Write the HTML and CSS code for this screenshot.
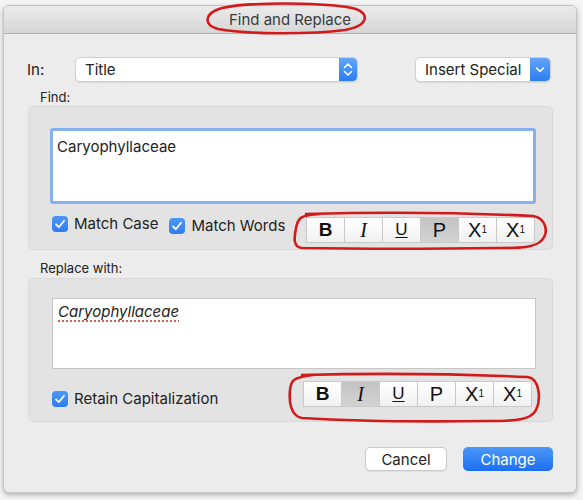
FILE: index.html
```html
<!DOCTYPE html>
<html>
<head>
<meta charset="utf-8">
<link rel="stylesheet" href="styles.css">
</head>
<body>
<div class="window">
  <div class="titlebar">Find and Replace</div>
  <div class="content">
    <div class="top-row">
      <span class="in-label">In:</span>
      <div class="popup popup-title">
        <span class="popup-text">Title</span>
        <span class="stepper">
          <svg width="18" height="23" viewBox="0 0 18 23"><path d="M5.5 9.5 L9 6 L12.5 9.5" fill="none" stroke="#fff" stroke-width="1.6" stroke-linecap="round" stroke-linejoin="round"/><path d="M5.5 13.5 L9 17 L12.5 13.5" fill="none" stroke="#fff" stroke-width="1.6" stroke-linecap="round" stroke-linejoin="round"/></svg>
        </span>
      </div>
      <div class="popup popup-special">
        <span class="popup-text">Insert Special</span>
        <span class="stepper">
          <svg width="20" height="23" viewBox="0 0 20 23"><path d="M6.5 10 L10 13.5 L13.5 10" fill="none" stroke="#fff" stroke-width="1.6" stroke-linecap="round" stroke-linejoin="round"/></svg>
        </span>
      </div>
    </div>

    <div class="section-label find-label">Find:</div>
    <div class="group find-group">
      <div class="field field-focus">Caryophyllaceae</div>
      <div class="option-row find-row">
        <label class="check"><span class="box"><svg width="16" height="16" viewBox="0 0 16 16"><path d="M4 8.3 L6.8 11.2 L12 4.8" fill="none" stroke="#fff" stroke-width="1.8" stroke-linecap="round" stroke-linejoin="round"/></svg></span>Match Case</label>
        <label class="check check-words"><span class="box"><svg width="16" height="16" viewBox="0 0 16 16"><path d="M4 8.3 L6.8 11.2 L12 4.8" fill="none" stroke="#fff" stroke-width="1.8" stroke-linecap="round" stroke-linejoin="round"/></svg></span>Match Words</label>
        <div class="fmt fmt-find">
          <span class="fb fb-b">B</span><span class="fb fb-i">I</span><span class="fb fb-u">U</span><span class="fb fb-p on">P</span><span class="fb fb-x">X<sup>1</sup></span><span class="fb fb-x">X<sub>1</sub></span>
        </div>
      </div>
    </div>

    <div class="section-label replace-label">Replace with:</div>
    <div class="group replace-group">
      <div class="field field-plain"><span class="misspelt">Caryophyllaceae</span></div>
      <div class="option-row replace-row">
        <label class="check check-retain"><span class="box"><svg width="16" height="16" viewBox="0 0 16 16"><path d="M4 8.3 L6.8 11.2 L12 4.8" fill="none" stroke="#fff" stroke-width="1.8" stroke-linecap="round" stroke-linejoin="round"/></svg></span>Retain Capitalization</label>
        <div class="fmt fmt-replace">
          <span class="fb fb-b">B</span><span class="fb fb-i on">I</span><span class="fb fb-u">U</span><span class="fb fb-p">P</span><span class="fb fb-x">X<sup>1</sup></span><span class="fb fb-x">X<sub>1</sub></span>
        </div>
      </div>
    </div>

    <div class="footer">
      <button class="btn btn-cancel">Cancel</button>
      <button class="btn btn-change">Change</button>
    </div>
  </div>
</div>

<svg class="annotations" width="583" height="500" viewBox="0 0 583 500">
  <path d="M232 6 C270 2 335 3 356 9 C370 14 368 26 345 30 C305 35 245 34 218 29 C203 25 204 13 222 8 C236 5 252 4 266 4" fill="none" stroke="#d31a1a" stroke-width="2.6" stroke-linecap="round"/>
  <path d="M306 214 C380 212 470 213 533 216 C546 218 549 232 542 240 C535 248 520 248 500 248 C430 249 360 249 302 248 C293 247 294 238 296 228 C298 218 300 215 320 214" fill="none" stroke="#d31a1a" stroke-width="2.6" stroke-linecap="round"/>
  <path d="M302 375 C380 373 460 374 528 377 C540 379 541 400 536 410 C531 420 515 421 490 421 C420 422 350 421 302 418 C290 416 289 400 290 390 C291 380 293 377 315 375" fill="none" stroke="#d31a1a" stroke-width="2.6" stroke-linecap="round"/>
</svg>
</body>
</html>
```

FILE: styles.css
```css
html, body {
  margin: 0;
  padding: 0;
}

body {
  width: 583px;
  height: 500px;
  background: #f4f4f4;
  font-family: Inter, "Liberation Sans", sans-serif;
  color: #222;
  position: relative;
  overflow: hidden;
}

.window {
  box-sizing: border-box;
  width: 574px;
  height: 488px;
  margin: 5px 0 0 3px;
  border: 1px solid #c4c4c4;
  border-radius: 6px;
  background: #ececec;
  overflow: hidden;
  box-shadow: 0 2px 5px rgba(0, 0, 0, 0.28);
}

.titlebar {
  height: 27px;
  line-height: 27px;
  border-bottom: 1px solid #b2b2b2;
  background: linear-gradient(#ebebeb, #d6d6d6);
  text-align: center;
  font-size: 15px;
  color: #3a3a3a;
}

.content {
  padding: 23px 0 0 23px;
}

.top-row {
  display: flex;
  align-items: center;
  height: 25px;
}

.in-label {
  width: 48px;
  font-size: 15px;
}

.popup {
  box-sizing: border-box;
  height: 25px;
  display: flex;
  align-items: center;
  background: #fff;
  border: 1px solid #cfcfcf;
  border-radius: 5px;
  box-shadow: 0 1px 1px rgba(0, 0, 0, 0.08);
  font-size: 15px;
  overflow: hidden;
}

.popup-text {
  flex: 1;
  padding-left: 9px;
}

.popup-title {
  width: 283px;
}

.popup-special {
  width: 136px;
  margin-left: 57px;
}

.stepper {
  display: flex;
  height: 23px;
  background: linear-gradient(#62a6f8, #2b7cf1);
  border-radius: 0 4px 4px 0;
}

.section-label {
  font-size: 13px;
  line-height: 16px;
  margin-left: 13px;
}

.find-label {
  margin-top: 7px;
  margin-bottom: 1px;
}

.replace-label {
  margin-top: 10px;
  margin-bottom: 2px;
}

.group {
  box-sizing: border-box;
  width: 525px;
  height: 144px;
  margin-left: 1px;
  background: #e3e3e3;
  border: 1px solid #d9d9d9;
  border-radius: 5px;
}

.find-group {
  padding: 21px 0 0 21px;
}

.replace-group {
  padding: 19px 0 0 23px;
}

.field {
  box-sizing: border-box;
  background: #fff;
  font-size: 15px;
}

.field-focus {
  width: 486px;
  height: 76px;
  border: 3px solid #86b1ec;
  border-radius: 3px;
  padding: 6px 0 0 4px;
}

.field-plain {
  width: 484px;
  height: 71px;
  border: 1px solid #c6c6c6;
  padding: 3px 0 0 5px;
  font-style: italic;
}

.misspelt {
  text-decoration: underline dotted #e05a5a;
  text-decoration-thickness: 2px;
  text-underline-offset: 3px;
}

.option-row {
  display: flex;
  align-items: flex-start;
  width: 486px;
}

.find-row {
  margin-top: 10px;
}

.replace-row {
  margin-top: 12px;
  width: 484px;
}

.check {
  display: flex;
  align-items: center;
  font-size: 15px;
  margin-left: 2px;
  gap: 6px;
}

.check-words {
  margin-left: 11px;
  margin-top: 2px;
}

.check-retain {
  margin-top: 8px;
  margin-left: 0;
}

.box {
  display: flex;
  width: 16px;
  height: 16px;
  border-radius: 4px;
  background: linear-gradient(#4d97f7, #2f7cf2);
}

.fmt {
  display: flex;
  margin-left: auto;
}

.fmt-find {
  margin-top: 3px;
  margin-right: 1px;
}

.fmt-replace {
  margin-right: 4px;
}

.fb {
  box-sizing: border-box;
  width: 39px;
  height: 26px;
  display: flex;
  align-items: center;
  justify-content: center;
  background: linear-gradient(#ffffff, #f1f1f1);
  border: 1px solid #c9c9c9;
  margin-left: -1px;
  font-family: "Liberation Sans", Arial, sans-serif;
  font-size: 20px;
  color: #111;
}

.fb:first-child {
  margin-left: 0;
}

.fb.on {
  background: linear-gradient(#c3c3c3, #d3d3d3);
}

.fb-b {
  font-weight: bold;
  font-size: 19px;
}

.fb-i {
  font-family: "Liberation Serif", serif;
  font-style: italic;
  font-size: 20px;
}

.fb-u {
  text-decoration: underline;
  text-decoration-thickness: 1px;
  text-underline-offset: 2px;
  font-size: 17px;
}

.fb-x sup,
.fb-x sub {
  font-size: 10px;
  line-height: 0;
}

.fb-x sup {
  vertical-align: 9px;
}

.fb-x sub {
  vertical-align: -3px;
}

.footer {
  display: flex;
  justify-content: flex-end;
  gap: 16px;
  width: 526px;
  margin-top: 25px;
}

.btn {
  box-sizing: border-box;
  height: 24px;
  border-radius: 5px;
  font-family: Inter, "Liberation Sans", sans-serif;
  font-size: 15px;
  padding: 0;
}

.btn-cancel {
  width: 82px;
  background: #fff;
  border: 1px solid #c8c8c8;
  color: #222;
  box-shadow: 0 1px 1px rgba(0, 0, 0, 0.06);
}

.btn-change {
  width: 90px;
  border: none;
  color: #fff;
  background: linear-gradient(#4b98f8, #1d6ff2);
}

.annotations {
  position: absolute;
  top: 0;
  left: 0;
  pointer-events: none;
}
```
